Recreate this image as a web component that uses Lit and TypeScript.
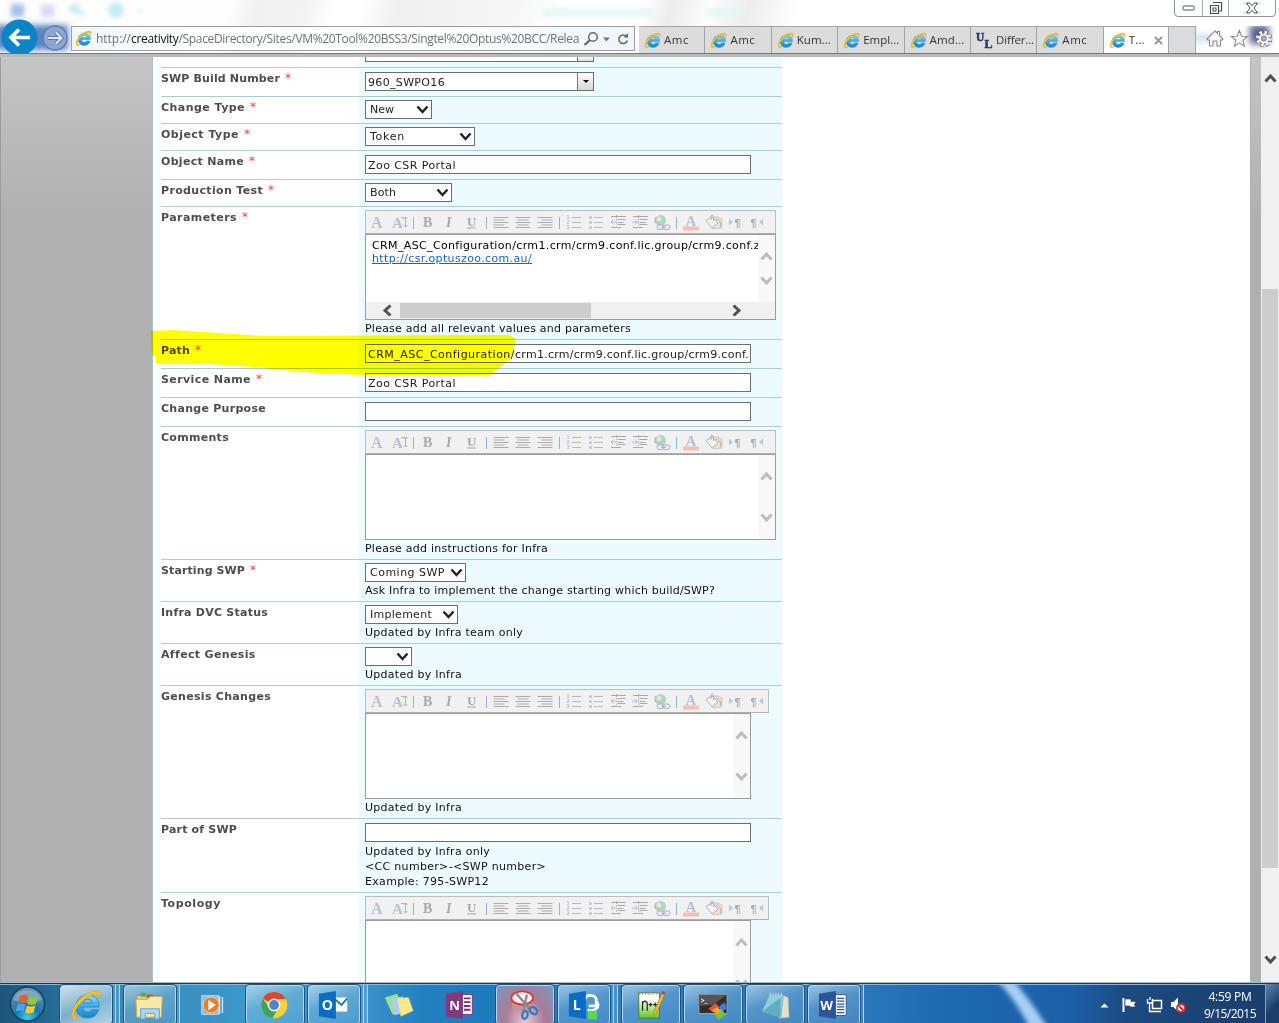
import { LitElement, html, svg, css, nothing } from "lit";
import { customElement, property } from "lit/decorators.js";

/** Text run whose tracking is adjusted so that it fills a given width. */
@customElement("fit-text")
class FitText extends LitElement {
  @property({ type: Number }) w = 0;
  static styles = css`
    :host { display: inline-block; white-space: pre; }
    .run { display: inline-block; white-space: pre; text-decoration: inherit; text-underline-offset: inherit; }
  `;
  render() { return html`<span class="run"><slot></slot></span>`; }
  firstUpdated() {
    const n = (this.textContent || "").length;
    if (!this.w || !n) return;
    const run = this.renderRoot.querySelector(".run") as HTMLElement;
    const natural = run.getBoundingClientRect().width;
    run.style.letterSpacing = ((this.w - natural) / n).toFixed(3) + "px";
  }
}

const fit = (t: string, w: number) => html`<fit-text w=${w}>${t}</fit-text>`;

const ieIcon = (size: number) => html`<svg width=${size} height=${size} viewBox="0 0 32 32">
  <defs><linearGradient id="ie" x1="0" y1="0" x2="0" y2="1"><stop offset="0" stop-color="#8bdcf8"/><stop offset=".5" stop-color="#37ace4"/><stop offset="1" stop-color="#1583c8"/></linearGradient></defs>
  <path d="M29 18H12.500c.3 3.500 2.500 5 5 5 2 0 3.400-.8 4.200-2.300h6.800C27 26 23 29 17.500 29 10.500 29 6 24.500 6 17.500S11 6 18 6c7.500 0 11.500 5 11 12zM22.500 14c-.4-2.500-2.200-3.800-4.700-3.800-2.600 0-4.500 1.400-5 3.800z" fill="url(#ie)" stroke="#1a86c4" stroke-width=".8"/>
  <path d="M3.500 29.500C-1 25 5 12.500 15 6 22 1.500 30 .5 30.500 4.500c.2 2-.6 4-1.600 6 .3-2.500.3-4.500-1.400-5C24 4.500 17 7.500 11.500 13 6 18.500 2.500 25.500 5 27.500c1.500 1 4 .2 6.500-1.300C8.500 29 5 31 3.500 29.500z" fill="#f6c21c" stroke="#d79c10" stroke-width=".5"/>
</svg>`;

const chevron = (dir: "up" | "down" | "left" | "right", color: string, size = 13, sw = 3) => {
  const d = { up: "M1.500 9.500 6.500 4 11.500 9.500", down: "M1.500 3.500 6.500 9 11.500 3.500", left: "M9.500 1.500 4 6.500 9.500 11.500", right: "M3.500 1.500 9 6.500 3.500 11.500" }[dir];
  return html`<svg width=${size} height=${size} viewBox="0 0 13 13"><path d=${d} fill="none" stroke=${color} stroke-width=${sw}/></svg>`;
};

const lines = (x: number, ws: number[], align: number, color = "#ababab") =>
  ws.map((w, i) => svg`<rect x=${x + (15 - w) * align} y=${6 + i * 2.500} width=${w} height="1" fill=${color}/>`);

@customElement("rich-toolbar")
class RichToolbar extends LitElement {
  static styles = css`
    :host { display: block; height: 22px; background: #f1f1f1; border: 1px solid #bdbdbd; border-bottom: 1px solid #b0b0b0; }
    svg { display: block; }
    text { font-family: "Liberation Serif", serif; font-weight: bold; fill: #a9a9a9; }
    .pale { fill: #b9c0d2; }
    .glyph { font-family: "Liberation Sans", sans-serif; }
  `;
  render() {
    const sep = (x: number) => svg`<rect x=${x} y="6" width="1" height="12" fill="#8fb3de"/>`;
    return html`<svg width="402" height="22" viewBox="0 0 402 22">
      <text class="pale" x="5" y="16.500" font-size="16">A</text>
      <text x="26" y="16.500" font-size="15" class="pale">A</text>
      <path d="M35 6.500h6M39.500 6v10M37.500 8l2-2 2 2M37.500 14l2 2 2-2" fill="none" stroke="#b5b5b5"/>
      ${sep(47)}
      <text x="57" y="16" font-size="14">B</text>
      <text x="80" y="16" font-size="14" font-style="italic">I</text>
      <text x="101" y="15" font-size="13">U</text><rect x="101" y="16.500" width="9" height="1" fill="#a9a9a9"/>
      ${sep(120)}
      ${lines(127.500, [15, 11, 15, 11, 15], 0)}
      ${lines(149.500, [15, 11, 15, 11, 15], 0.500)}
      ${lines(171.500, [15, 11, 15, 11, 15], 1)}
      ${sep(193)}
      ${[6, 11, 16].map((y, i) => svg`<rect x="206" y=${y} width="9" height="1" fill="#b9b9b9"/><text class="pale glyph" x="200.500" y=${y + 2} font-size="5.500">${i + 1}</text>`)}
      ${[6, 11, 16].map((y) => svg`<rect x="228" y=${y} width="9" height="1" fill="#b9b9b9"/><circle cx="224.500" cy=${y + 0.500} r="1.500" fill="#bcc5dc"/>`)}
      ${[245, 267].map((x, i) => svg`
        <path d=${`M${x} 5.500h15M${x + 6.500} 8.500h8M${x + 6.500} 11.500h6M${x + 6.500} 13.500h8M${x} 16.500h10`} stroke="#a9a9a9" fill="none" stroke-width="1.200"/>
        <path d=${i ? `M${x - 1} 11h5M${x + 2} 8.500l2.500 2.500-2.500 2.500` : `M${x} 11h5M${x + 2.500} 8.500l-2.500 2.500 2.500 2.500`} stroke="#b3bdd6" fill="none"/>
        <path d=${`M${x + 5.500} 4v14`} stroke="#b4b4b4" stroke-dasharray="1 1"/>`)}
      <circle cx="294.500" cy="9.500" r="5.500" fill="#b5d3bc"/><circle cx="293" cy="8" r="2.500" fill="#d8ecd9"/>
      <path d="M289.500 12c-1-3 0-5 .5-6" stroke="#a9bcd8" fill="none" stroke-width="1.500"/>
      <rect x="291" y="14" width="7" height="4.500" rx="2.200" fill="#eee" stroke="#a6b0c6"/><rect x="297" y="14" width="7" height="4.500" rx="2.200" fill="#eee" stroke="#a6b0c6"/><rect x="295" y="15.700" width="5" height="1.200" fill="#a6b0c6"/>
      ${sep(310)}
      <text x="319.500" y="15" font-size="15" class="pale">A</text><rect x="317" y="15.500" width="16" height="4" fill="#f4bfae"/>
      <path d="M344 6h8l4 2v9l-9 1z" fill="#ece1cb" stroke="#c9c3b6" stroke-width=".8"/>
      <path d="M340 9.500l6-3.500 6 6-6 5z" fill="#f3f3f3" stroke="#b0b4bd"/><path d="M345 9V5.500c0-1.800 2.500-1.800 2.500 0V10M350 8c4 1 5 4 4.500 8" stroke="#aab2c4" fill="none"/>
      <path d="M363 7.500v7l4-3.500z" fill="#b9c8e2"/><text class="glyph" x="368.500" y="15.500" font-size="11">¶</text>
      <text class="glyph" x="384.500" y="15.500" font-size="11">¶</text><path d="M397 7.500v7l-4-3.500z" fill="#b9c8e2"/>
    </svg>`;
  }
}

type Control =
  | { kind: "combo"; text: string; w: number }
  | { kind: "select"; text: string; w: number; box: number }
  | { kind: "input"; runs: [string, number][] }
  | { kind: "rich"; wide: boolean; body?: boolean };
interface Field { label: string; lw: number; req?: boolean; control: Control; hints?: [string, number][]; }

const FIELDS: Field[] = [
  { label: "SWP Build Number", lw: 119, req: true, control: { kind: "combo", text: "960_SWPO16", w: 77 } },
  { label: "Change Type", lw: 84, req: true, control: { kind: "select", text: "New", w: 24, box: 67 } },
  { label: "Object Type", lw: 78, req: true, control: { kind: "select", text: "Token", w: 35, box: 110 } },
  { label: "Object Name", lw: 83, req: true, control: { kind: "input", runs: [["Zoo CSR Portal", 88]] } },
  { label: "Production Test", lw: 102, req: true, control: { kind: "select", text: "Both", w: 26, box: 87 } },
  { label: "Parameters", lw: 76, req: true, control: { kind: "rich", wide: true, body: true }, hints: [["Please add all relevant values and parameters", 266]] },
  { label: "Path", lw: 29, req: true, control: { kind: "input", runs: [["CRM_ASC_Configuration/", 147], ["crm1.crm/crm9.conf.lic.group/crm9.conf.", 234]] } },
  { label: "Service Name", lw: 90, req: true, control: { kind: "input", runs: [["Zoo CSR Portal", 88]] } },
  { label: "Change Purpose", lw: 105, control: { kind: "input", runs: [] } },
  { label: "Comments", lw: 68, control: { kind: "rich", wide: true }, hints: [["Please add instructions for Infra", 183]] },
  { label: "Starting SWP", lw: 84, req: true, control: { kind: "select", text: "Coming SWP", w: 75, box: 101 }, hints: [["Ask Infra to implement the change starting which build/SWP?", 350]] },
  { label: "Infra DVC Status", lw: 107, control: { kind: "select", text: "Implement", w: 62, box: 93 }, hints: [["Updated by Infra team only", 158]] },
  { label: "Affect Genesis", lw: 94, control: { kind: "select", text: "", w: 0, box: 47 }, hints: [["Updated by Infra", 97]] },
  { label: "Genesis Changes", lw: 110, control: { kind: "rich", wide: false }, hints: [["Updated by Infra", 97]] },
  { label: "Part of SWP", lw: 76, control: { kind: "input", runs: [] }, hints: [["Updated by Infra only", 125], ["<CC number>-<SWP number>", 181], ["Example: 795-SWP12", 124]] },
  { label: "Topology", lw: 60, control: { kind: "rich", wide: false } },
];

@customElement("change-form")
class ChangeForm extends LitElement {
  static styles = css`
    :host { display: block; width: 621px; font: 11px/15px "DejaVu Sans", sans-serif; color: #111; }
    .row { display: flex; border-top: 1px solid #a9cdda; }
    .label { box-sizing: border-box; width: 198px; padding-top: 3px; color: #4d4d4d; font-weight: bold; white-space: nowrap; }
    .req { color: #f0403c; font-weight: normal; margin-left: 5px; font-size: 12px; }
    .cell { box-sizing: border-box; width: 423px; background: #edfaff; padding: 3px 0 4px 6px; }
    .stub .cell { height: 10px; padding-top: 0; }
    .stub { border: 0; }
    .box { display: flex; box-sizing: border-box; height: 19px; border: 1px solid #6b6d70; background: #fff; line-height: 19px; overflow: hidden; white-space: nowrap; color: #222; }
    .input { width: 386px; margin: 1px 0; padding-left: 2px; }
    .combo { width: 229px; margin: 1px 0; padding-left: 2px; justify-content: space-between; }
    .stub .combo { height: 5px; margin: 0; border-top: 0; }
    .drop { width: 15px; border-left: 1px solid #777; background: linear-gradient(#fbfbfb, #d9d9d9); display: flex; align-items: center; justify-content: center; }
    .select { padding: 0 2px 0 4px; justify-content: space-between; align-items: center; }
    .s67 { width: 67px; } .s110 { width: 110px; } .s87 { width: 87px; } .s101 { width: 101px; } .s93 { width: 93px; } .s47 { width: 47px; }
    .bar { width: 404px; box-sizing: border-box; height: 24px; }
    .wide .bar { width: 411px; }
    .editor { box-sizing: border-box; width: 386px; height: 86px; border: 1px solid #9b9b9b; background: #fff; display: flex; flex-direction: column; }
    .wide .editor { width: 411px; }
    .view { flex: 1; display: flex; min-height: 0; }
    .doc { flex: 1; min-width: 0; overflow: hidden; padding: 4px 0 0 6px; line-height: 13px; white-space: nowrap; color: #000; }
    .link fit-text { color: #1464c0; text-decoration: underline; text-underline-offset: 1px; }
    .vscroll { width: 17px; background: #f8f8f8; display: flex; flex-direction: column; align-items: center; justify-content: space-between; padding: 15px 0; box-sizing: border-box; }
    .hscroll { height: 17px; background: #f0f0f0; display: flex; align-items: center; padding-left: 15px; }
    .thumb { height: 15px; width: 191px; background: #cdcdcd; margin: 0 139px 0 6px; }
    .hint { height: 15px; line-height: 17px; white-space: nowrap; }
    svg { display: block; flex: none; }
  `;
  private control(c: Control) {
    switch (c.kind) {
      case "combo":
        return html`<div class="box combo">${c.text ? fit(c.text, c.w) : html`<span></span>`}<div class="drop">${c.text ? html`<svg width="6" height="3" viewBox="0 0 6 3"><path d="M0 0h6L3 3z" fill="#000"/></svg>` : nothing}</div></div>`;
      case "select":
        return html`<div class="box select s${c.box}">${c.text ? fit(c.text, c.w) : html`<span></span>`}${chevron("down", "#222", 13, 2.500)}</div>`;
      case "input":
        return html`<div class="box input">${c.runs.map(([t, w]) => fit(t, w))}</div>`;
      case "rich":
        return html`<div class=${c.wide ? "wide" : "narrow"}>
          <rich-toolbar class="bar"></rich-toolbar>
          <div class="editor">
            <div class="view">
              <div class="doc">${c.body ? html`<div>${fit("CRM_ASC_Configuration/crm1.crm/crm9.conf.lic.group/crm9.conf.z", 388)}</div><div class="link">${fit("http://csr.optuszoo.com.au/", 160)}</div>` : nothing}</div>
              <div class="vscroll">${chevron("up", "#bdbdbd")}${chevron("down", "#bdbdbd")}</div>
            </div>
            ${c.body ? html`<div class="hscroll">${chevron("left", "#505050")}<div class="thumb"></div>${chevron("right", "#505050")}</div>` : nothing}
          </div></div>`;
    }
  }
  render() {
    return html`
      <div class="row stub"><div class="label"></div><div class="cell">${this.control({ kind: "combo", text: "", w: 0 })}</div></div>
      ${FIELDS.map((f) => html`<div class="row">
        <div class="label">${fit(f.label, f.lw)}${f.req ? html`<span class="req">*</span>` : nothing}</div>
        <div class="cell">${this.control(f.control)}${(f.hints || []).map(([t, w]) => html`<div class="hint">${fit(t, w)}</div>`)}</div>
      </div>`)}`;
  }
}

@customElement("browser-chrome")
class BrowserChrome extends LitElement {
  static styles = css`
    :host { display: block; position: relative; height: 57px; box-sizing: border-box; overflow: hidden; font: 11.5px/16px "Open Sans", sans-serif; color: #333;
      border-bottom: 3px solid #b9b9b9;
      background: linear-gradient(105deg, #fdfdfd 0 18%, #f1f1f1 20%, #f4f4f4 24%, #fff 26% 28%, #f0f0f0 31%, #f7f7f7 40%, #fff 44% 50%, #ececec 52%, #fdfdfd 55%, #ededed 58%, #fff 62% 100%); }
    .glass { position: absolute; left: 0; top: 0; }
    .caption { position: absolute; right: 3px; top: -1px; width: 102px; height: 18px; box-sizing: border-box; border: 1px solid #8d9199; border-radius: 0 0 4px 4px; display: grid; grid-template-columns: 27px 27px 1fr; background: #fbfdfe; }
    .caption svg { display: block; margin: auto; }
    .mid { border-left: 1px solid #a5a8ae; border-right: 1px solid #a5a8ae; display: flex; }
    .bar { position: relative; display: flex; height: 36px; margin-top: 18px; align-items: flex-start; border-bottom: 1px solid #777; box-sizing: border-box; }
    .nav { display: block; width: 71px; height: 36px; flex: none; }
    .address { box-sizing: border-box; width: 564px; height: 25px; margin-top: 8px; border: 1px solid #9c9ea2; background: linear-gradient(90deg, #f1f6fb, #fff 25%, #fbfdff 50%, #fff 60%, #eef5fb); display: flex; align-items: center; padding-left: 3px; color: #6f7378; font-size: 12px; }
    .address svg { display: block; flex: none; }
    .url { width: 484px; margin-left: 4px; white-space: nowrap; overflow: hidden; }
    .host { color: #111; }
    .tabs { display: flex; margin: 8px 0 0 4px; height: 27px; }
    .tab { box-sizing: border-box; width: 66.400px; height: 27px; border: 1px solid #a4a4a4; border-left: 0; border-bottom: 0; background: #dcdcdc; display: flex; align-items: center; padding-left: 5px; gap: 3px; white-space: nowrap; font-size: 11.5px; }
    .tab svg { flex: none; }
    .active { background: #fff; width: 65.500px; }
    .close { margin-left: auto; margin-right: 5px; }
    .blank { width: 27px; background: #d9dcdf; }
    .tools { display: block; margin: 8px 0 0 7px; }
  `;
  render() {
    const ie = ieIcon(17);
    const ul = html`<svg width="17" height="20" viewBox="0 0 17 20"><text x="0" y="11" font-family="Liberation Serif" font-weight="bold" font-size="11.500" fill="#223a60" stroke="#223a60" stroke-width=".5">U</text><text x="8.500" y="18" font-family="Liberation Serif" font-weight="bold" font-size="12" fill="#223a60" stroke="#223a60" stroke-width=".5">L</text></svg>`;
    const tabs: [string, number, unknown][] = [["Amc", 25, ie], ["Amc", 25, ie], ["Kum...", 34, ie], ["Empl...", 36, ie], ["Amd...", 35, ie], ["Differ...", 38, ul], ["Amc", 25, ie]];
    return html`
      <svg class="glass" width="1279" height="54" viewBox="0 0 1279 54">
        <defs><filter id="b" x="-50%" y="-50%" width="200%" height="200%"><feGaussianBlur stdDeviation="3"/></filter>
        <filter id="b2" x="-50%" y="-50%" width="200%" height="200%"><feGaussianBlur stdDeviation="2.500"/></filter></defs>
        <g filter="url(#b2)"><rect x="11" y="4" width="13" height="13" fill="#a3c0ee"/><rect x="41" y="5" width="13" height="12" fill="#d9d9f8"/><path d="M70 9l6-4v4l8 5-8-2z" fill="#a5dcf0" stroke="#bfe8f5" stroke-width="3"/><circle cx="116" cy="10" r="6" fill="#c9f1f6" stroke="#a5def0" stroke-width="2"/><circle cx="140" cy="11" r="2" fill="#c5eef5"/></g>
        <rect x="543" y="9" width="110" height="7" fill="#def7f5" filter="url(#b)"/><rect x="706" y="9" width="32" height="7" fill="#def7f5" filter="url(#b)"/>
        <rect x="-5" y="25" width="73" height="25" fill="#5b84c4" filter="url(#b)"/>
        <rect x="1160" y="34" width="60" height="8" fill="#cfe2f5" filter="url(#b)"/>
      </svg>
      <div class="caption">
        <svg width="14" height="6" viewBox="0 0 14 6"><rect x="1" y="1" width="11" height="4" rx="1" fill="#fff" stroke="#53565f"/></svg>
        <div class="mid"><svg width="14" height="13" viewBox="0 0 14 13"><path d="M4 .5h8.500v8.500H10M1.500 3.500h8v8h-8z" fill="#fff" stroke="#4a4d58" stroke-width="1.200"/><rect x="4" y="6" width="3" height="3" fill="#fff" stroke="#4a4d58"/></svg></div>
        <svg width="14" height="12" viewBox="0 0 14 12"><path d="M1.500 1h3.200L7 3.700 9.300 1h3.200L9 6l3.500 5H9.300L7 8.300 4.700 11H1.500L5 6z" fill="#fff" stroke="#4a4d58"/></svg>
      </div>
      <div class="bar">
        <svg class="nav" viewBox="0 0 71 36">
          <circle cx="19.500" cy="19.500" r="18" fill="#0c84c8"/><path d="M30 19.500H12M19 11.500l-8 8 8 8" fill="none" stroke="#fff" stroke-width="3.600"/>
          <circle cx="55" cy="20" r="12" fill="#8aa6d3" stroke="#5f7fae" stroke-width="1.500"/><path d="M48 20h13M56 14.500l5.500 5.500-5.500 5.500" fill="none" stroke="#577aad" stroke-width="4"/><path d="M48 20h13M56 14.500l5.500 5.500-5.500 5.500" fill="none" stroke="#dfeaf6" stroke-width="2"/>
        </svg>
        <div class="address">${ieIcon(17)}
          <div class="url">${fit("http://", 35)}<span class="host">${fit("creativity", 47.500)}</span>${fit("/SpaceDirectory/Sites/VM%20Tool%20BSS3/Singtel%20Optus%20BCC/Relea", 400.500)}</div>
          <svg width="54" height="18" viewBox="0 0 54 18"><circle cx="13" cy="7" r="4.300" fill="none" stroke="#666" stroke-width="1.500"/><path d="M10 10l-5.500 5" stroke="#666" stroke-width="2.300"/><path d="M23 7.500h7l-3.500 4z" fill="#777"/><path d="M46.500 6.500a4.300 4.300 0 1 0 .8 4" fill="none" stroke="#666" stroke-width="1.600"/><path d="M43.500 7.500h4.500V3z" fill="#666"/></svg>
        </div>
        <div class="tabs">
          ${tabs.map(([t, w, i]) => html`<div class="tab">${i}${fit(t, w)}</div>`)}
          <div class="tab active">${ieIcon(17)}${fit("T...", 16)}<svg class="close" width="9" height="9" viewBox="0 0 9 9"><path d="M1 1l7 7M8 1L1 8" stroke="#999" stroke-width="2"/></svg></div>
          <div class="tab blank"></div>
        </div>
        <svg class="tools" width="76" height="26" viewBox="0 0 76 26">
          <defs><filter id="g" x="-50%" y="-50%" width="200%" height="200%"><feGaussianBlur stdDeviation="3.500"/></filter></defs>
          <rect x="47" y="-1" width="19" height="19" fill="#55608c" filter="url(#g)"/>
          <path d="M4 13L12 5l2.500 2.500V5.500h2v4L20 13l-1 1h-1.500v6H14v-5h-4v5H6.500v-6H5z" fill="#fff" stroke="#8b8b8b" stroke-width="1.100"/>
          <path d="M36.500 4.500l2.200 5.700 6 .3-4.700 3.800 1.600 5.900-5.100-3.400-5.100 3.400 1.600-5.900-4.700-3.800 6-.3z" fill="#fff" stroke="#8b8b8b" stroke-width="1.100"/>
          <circle cx="61" cy="12.500" r="6.300" fill="none" stroke="#6d6d74" stroke-width="4.500" stroke-dasharray="3 1.950"/><circle cx="61" cy="12.500" r="5.300" fill="#fff" stroke="#77777c"/><circle cx="61" cy="12.500" r="6" fill="none" stroke="#fff" stroke-width="3.600" stroke-dasharray="2.200 2.512"/>
          <circle cx="61" cy="12.500" r="2.600" fill="#aab0c4" stroke="#77777c"/>
        </svg>
      </div>`;
  }
}

const appIcon = {
  folder: svg`<path d="M3 6h8l2 2h15v20H3z" fill="#e9cf72" stroke="#b99a3c"/><path d="M7 3h6v4H7z" fill="#4caf50"/><path d="M14 5h6v3h-6z" fill="#c84b3c"/><path d="M22 6h6v3h-6z" fill="#4a8fd0"/><path d="M2 10h13l2-3h13v3l-1 19H3z" fill="#fae9a6" stroke="#c9aa4c"/><path d="M7 31V20h20v11h-5v-6h-10v6z" fill="#a8d8f0" stroke="#5da3cc"/>`,
  media: svg`<path d="M5 6h18v20H5z" fill="#8ebbe0" stroke="#c0dcf0"/><path d="M24 6.500v19M27 7.500v17" stroke="#cfe4f5" stroke-width="1.500"/><circle cx="15" cy="16" r="8.500" fill="#ef7b22" stroke="#fbd0a8"/><path d="M12 10.500v11l8-5.500z" fill="#fff"/>`,
  chrome: svg`<circle cx="16" cy="16" r="14" fill="#f8d03c"/><path d="M16 16L4 9A14 14 0 0 1 28.500 10H16z" fill="#dc4536"/><path d="M4 9A14 14 0 0 0 14.500 30L21 19 16 16l-5 3z" fill="#3aa757"/><path d="M28.500 10A14 14 0 0 1 14.500 30L21 19V10z" fill="#f8d03c"/><circle cx="16" cy="16" r="6.800" fill="#f4f4f4"/><circle cx="16" cy="16" r="5.200" fill="#4c86c8"/>`,
  outlook: svg`<path d="M17 8h14v15H17z" fill="#fff"/><path d="M17 9l8 7 6-7" fill="none" stroke="#1272c4" stroke-width="2"/><path d="M1 4l18-3v30L1 28z" fill="#0a6cc4"/><text x="4" y="21" font-size="15" fill="#fff">O</text>`,
  sticky: svg`<path d="M2 8l13-4 7 17-12 5z" fill="#9ddf92"/><path d="M9 9l12-2 4 17-13 3z" fill="#aacdf2"/><path d="M15 9l12-1 5 14-13 6z" fill="#f7e88a" stroke="#e0cf6a" stroke-width=".5"/>`,
  onenote: svg`<path d="M18 5h11v21H18z" fill="#fff" stroke="#7b3172"/><path d="M20 9h7M20 13h7M20 17h7M20 21h7" stroke="#7b3172" stroke-width="2"/><path d="M1 4l18-3v30L1 28z" fill="#80397b"/><text x="4.500" y="21" font-size="14" fill="#fff">N</text>`,
  snip: svg`<ellipse cx="14" cy="16" rx="11" ry="7" fill="#c4949f"/><ellipse cx="14" cy="8.500" rx="11.500" ry="7" fill="#fbeeee" stroke="#d9383a" stroke-width="2"/><path d="M8 4l14 16M19 5l-4 19" stroke="#858d93" stroke-width="2.500"/><ellipse cx="26" cy="22" rx="4.500" ry="3.200" fill="none" stroke="#2d7fc6" stroke-width="2.500" transform="rotate(40 26 22)"/><ellipse cx="17" cy="26.500" rx="2.800" ry="4.200" fill="none" stroke="#2d7fc6" stroke-width="2.500" transform="rotate(15 17 26)"/>`,
  lync: svg`<path d="M18 10c1-6 12-5 12 0v7h-8M30 12c5 6-2 12-9 9" fill="none" stroke="#fff" stroke-width="3"/><path d="M1 4l18-3v30L1 28z" fill="#0a6cc4"/><text x="5" y="21" font-size="15" fill="#fff">L</text><rect x="21" y="22" width="10" height="9.500" fill="#5bd75b"/>`,
  npp: svg`<defs><linearGradient id="n" x1="0" y1="0" x2="0" y2="1"><stop offset=".25" stop-color="#fff"/><stop offset="1" stop-color="#62c41e"/></linearGradient></defs><path d="M4 3h22v27H4z" fill="url(#n)" stroke="#4c7d2a"/><path d="M5 2v3M8 2v3M11 2v3M14 2v3M17 2v3M20 2v3M23 2v3" stroke="#888"/><path d="M8 22V12M8 14q1-2 2.500-2t2.500 2v8M14.500 15.500h4M16.500 13.500v4M19.500 15.500h4M21.500 13.500v4" stroke="#222" stroke-width="1.300" fill="none"/><path d="M29 2l3 1.500L23 25l-3 2 .3-4z" fill="#f0b63c" stroke="#a77418" stroke-width=".7"/><path d="M29 1l3 1.500-1 3-3-1.500z" fill="#b54848"/>`,
  putty: svg`<path d="M2 5h30v20H2z" fill="#2e2e2e" stroke="#aaa"/><path d="M2 5h30L16 16 2 17z" fill="#555"/><text x="4" y="14" font-size="7" fill="#fff">&gt;_</text><path d="M12 20l8-6 4 5-7 5z" fill="#e8522c"/><path d="M23 18l6-5 3 6-6 5z" fill="#3c7be0"/><path d="M18 26l7-6 6 6-8 6z" fill="#6cc644"/><path d="M16 22l5-4 5 4-4 4z" fill="#f4a62c"/>`,
  notepad: svg`<path d="M24 5l7 3 1 21-11 1z" fill="#e5e1c8" stroke="#b7b39a" stroke-width=".5"/><path d="M11 5h15l-3 24-20-6z" fill="#8fcfdc" stroke="#5fa7b8" stroke-width=".7"/><path d="M3 23L23 8v21z" fill="#5cb0c2"/><path d="M12 3v3M15 3v3M18 3v3M21 3v3M24 3v3" stroke="#ddd"/>`,
  word: svg`<path d="M18 5h12v22H18z" fill="#fff" stroke="#2a5699"/><path d="M20 9h8M20 12h8M20 15h8M20 18h8M20 21h8M20 24h8" stroke="#2a5699" stroke-width="1.300"/><path d="M1 4l18-3v30L1 28z" fill="#2a5699"/><text x="2.500" y="21" font-size="14" fill="#fff">W</text>`,
};

@customElement("task-bar")
class TaskBar extends LitElement {
  static styles = css`
    :host { display: flex; position: relative; height: 40px; box-sizing: border-box; overflow: hidden; border-top: 1px solid #20394f; box-shadow: inset 0 1px #8ab7d4; font: 12px/17px "Open Sans", sans-serif; color: #fff;
      background: linear-gradient(90deg, #1d5578 0, #246a92 4%, #3686b5 9%, #3c9acd 20%, #3890c8 29%, #2380c0 33%, #1d7bbd 38%, #2e7fc0 45%, #2a78bb 67%, #1d68b0 75%, #1b5fa8 84%, #1c4a80 88%, #1a3d6a 100%); }
    svg { display: block; }
    text { font-family: "Open Sans", sans-serif; font-weight: bold; }
    .streak { position: absolute; left: 985px; top: 0; }
    .start { width: 60px; display: flex; justify-content: center; padding: 2px 6px 0 0; box-sizing: border-box; }
    .apps { display: flex; flex: none; padding-top: 1px; }
    .app { box-sizing: border-box; height: 39px; display: flex; align-items: center; justify-content: center; border: 1px solid transparent; position: relative; }
    .open { border-color: #b4d7ec; border-radius: 3px; outline: 1px solid #1d5580; outline-offset: 0; background: linear-gradient(160deg, #ffffff88, #ffffff30 45%, #ffffff1c); }
    .current { background: linear-gradient(160deg, #ffffffc8, #c8e4f488 55%, #e9f6ffb0); }
    .hot { background: radial-gradient(ellipse at 50% 100%, #efc9d2, #ab7c96 50%, #8e9cc4cc); }
    .w52 { width: 52px; } .w58 { width: 58px; } .w62 { width: 62px; } .w66 { width: 66px; }
    .stack { box-sizing: border-box; height: 39px; width: 4px; border-right: 1px solid #b4d7ec; background: #ffffff20; }
    .gap { width: 4px; }
    .tray { margin-left: auto; display: flex; align-items: center; z-index: 1; }
    .clock { width: 70px; text-align: center; padding-top: 3px; }
    .desk { box-sizing: border-box; width: 14px; height: 40px; border-left: 1px solid #7fa3c4; background: linear-gradient(135deg, #5d86b0, #1b3d68 60%); }
  `;
  private app(content: unknown, cls: string) {
    return html`<div class="app ${cls}"><svg width="32" height="32" viewBox="0 0 34 32">${content}</svg></div>`;
  }
  render() {
    const st = html`<div class="stack"></div>`;
    const gap = html`<div class="gap"></div>`;
    return html`
      <svg class="streak" width="80" height="41" viewBox="0 0 80 41"><defs><filter id="s"><feGaussianBlur stdDeviation="2.500"/></filter></defs><path d="M11 -5h16Q45 15 64 46H46Q30 15 11 -5z" fill="#a8d0f4" filter="url(#s)"/></svg>
      <div class="start"><svg width="37" height="37" viewBox="0 0 37 37">
        <defs><radialGradient id="o" cx=".5" cy=".9" r=".9"><stop offset="0" stop-color="#35d0f5"/><stop offset=".4" stop-color="#1976a8"/><stop offset="1" stop-color="#7696a8"/></radialGradient></defs>
        <circle cx="18.500" cy="18" r="17" fill="url(#o)" stroke="#0f4262" stroke-width="1.500"/><path d="M4 14A15 13 0 0 1 33 14Q18 20 4 14z" fill="#fff" opacity=".25"/>
        <path d="M11 10q4-2 8 0l-2 7q-4-2-8 0z" fill="#ef5a28"/><path d="M20.500 10.500q4 2 8.500 0l-2 7.500q-4 2-8.500 0z" fill="#8fc93c"/><path d="M8.500 18.500q4-2 8 0l-2 7q-4-2-8 0z" fill="#3fa9ec"/><path d="M18 19.500q4 2 8.500 0l-2 7q-4 2-8.500 0z" fill="#fdc82c"/>
      </svg></div>
      <div class="apps">
        <div class="app open current w52">${ieIcon(32)}</div>${st}${st}<div class="gap"></div>
        ${this.app(appIcon.folder, "open w52")}${st}
        ${this.app(appIcon.media, "w66")}
        ${this.app(appIcon.chrome, "open w58")}${gap}
        ${this.app(appIcon.outlook, "open w52")}${st}${st}
        ${this.app(appIcon.sticky, "w62")}${this.app(appIcon.onenote, "w62")}
        <div class="gap"></div>${this.app(appIcon.snip, "open hot w58")}${gap}
        ${this.app(appIcon.lync, "open w52")}${st}${st}<div class="gap"></div>
        ${this.app(appIcon.npp, "open w58")}${gap}
        ${this.app(appIcon.putty, "open w58")}${gap}
        ${this.app(appIcon.notepad, "open w58")}${gap}
        ${this.app(appIcon.word, "open w52")}${st}
      </div>
      <div class="tray">
        <svg width="98" height="24" viewBox="2 -1 98 24">
          <path d="M5.500 14.500h8l-4-4z" fill="#fff"/>
          <path d="M28.500 5v14" stroke="#fff" stroke-width="2"/><path d="M30 6h6v2.500h5l-1.500 3 1 2.500H35v-1h-5z" fill="#fff" stroke="#1a3358" stroke-width=".6"/>
          <path d="M57.500 7.500h9v8h-9z" fill="#1f4878" stroke="#fff" stroke-width="1.500"/><path d="M56 18.500h10M54.500 10v8.500h3M52.500 6v4h5V6M55 4v3" stroke="#fff" fill="none" stroke-width="1.300"/>
          <path d="M76 9h2.500L83 4.500v14L78.500 14H76z" fill="#fff"/><circle cx="86" cy="15" r="4" fill="#fff" stroke="#e02a2a" stroke-width="1.800"/><path d="M83.500 12.500l5 5" stroke="#e02a2a" stroke-width="1.800"/>
        </svg>
        <div class="clock"><div>${fit("4:59 PM", 43)}</div><div>${fit("9/15/2015", 52)}</div></div>
        <div class="desk"></div>
      </div>`;
  }
}

@customElement("app-root")
class AppRoot extends LitElement {
  static styles = css`
    :host { display: flex; flex-direction: column; position: relative; width: 1279px; height: 1023px; overflow: hidden; background: #b0b0b0; }
    browser-chrome { flex: none; }
    .page { flex: 1; min-height: 0; display: flex; overflow: hidden; border-bottom: 1px solid #b5b5b5; background: linear-gradient(#c5c5c5 0, #b0b0b0 160px); }
    .side { width: 152px; box-sizing: border-box; border-left: 1px solid #9c9c9c; border-right: 0; flex: none; }
    .sheet { box-sizing: border-box; width: 1099px; border-left: 1px solid #9fc6cb; border-right: 1px solid #9fb9c4; background: #fff; padding-left: 8px; flex: none; }
    .scroll { box-sizing: border-box; width: 18px; margin-left: auto; background: #f0f0f0; display: flex; flex-direction: column; align-items: center; padding-top: 15px; }
    .thumb { width: 16px; height: 579px; margin: 204px 0 85px; background: #cdcdcd; flex: none; }
    .marker { position: absolute; left: 150px; top: 325px; mix-blend-mode: multiply; }
    svg { flex: none; }
    task-bar { flex: none; }
  `;
  render() {
    return html`
      <browser-chrome></browser-chrome>
      <div class="page">
        <div class="side"></div>
        <div class="sheet"><change-form></change-form></div>
        <div class="scroll">${chevron("up", "#505050")}<div class="thumb"></div>${chevron("down", "#505050")}</div>
      </div>
      <task-bar></task-bar>
      <svg class="marker" width="370" height="56" viewBox="0 0 370 56"><path d="M1 6L23 5l60 4 30 2 246-1 7 4-3 15-6 8-7 5-4 3-6 5-127 0-60-3-50-5-54-4H6V31l-4-1z" fill="#ffff00"/></svg>`;
  }
}
